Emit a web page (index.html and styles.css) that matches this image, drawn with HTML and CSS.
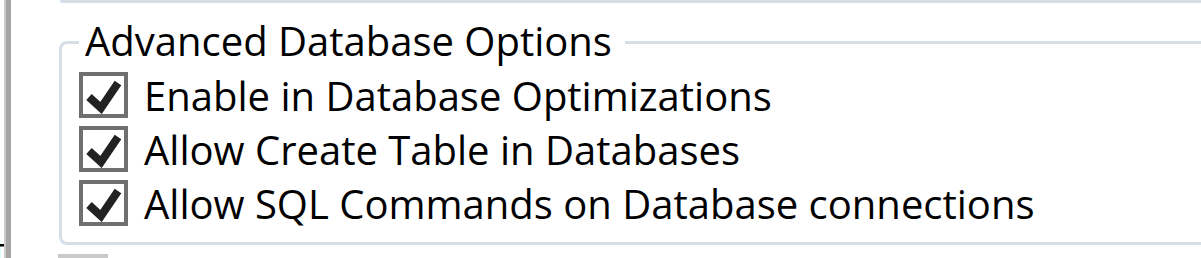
FILE: index.html
```html
<!DOCTYPE html>
<html lang="en">
  <head>
    <meta charset="UTF-8" />
    <meta name="viewport" content="width=device-width, initial-scale=1.0" />
    <title>Advanced Database Options</title>
    <link rel="stylesheet" href="styles.css">
  </head>
  <body>
    <!-- clipped panel on the left and its splitter -->
    <div class="side"><span class="side-text">t</span></div>
    <div class="splitter"></div>

    <div class="panel">
      <!-- bottom edge of the group above -->
      <div class="prev-group"></div>

      <fieldset class="group">
        <legend>Advanced Database Options</legend>
        <label class="option">
          <span class="box">
            <svg viewBox="0 0 41 38"><path d="M6 21 L18 32 L35 7" /></svg>
          </span>
          <span class="option-text">Enable in Database Optimizations</span>
        </label>
        <label class="option">
          <span class="box">
            <svg viewBox="0 0 41 38"><path d="M6 21 L18 32 L35 7" /></svg>
          </span>
          <span class="option-text">Allow Create Table in Databases</span>
        </label>
        <label class="option">
          <span class="box">
            <svg viewBox="0 0 41 38"><path d="M6 21 L18 32 L35 7" /></svg>
          </span>
          <span class="option-text">Allow SQL Commands on Database connections</span>
        </label>
      </fieldset>

      <!-- top of the button below -->
      <div class="next-button"></div>
    </div>
  </body>
</html>
```

FILE: styles.css
```css
* {
  margin: 0;
  padding: 0;
  box-sizing: border-box;
}

body {
  height: 258px;
  overflow: hidden;
  display: flex;
  background-color: #fff;
  color: #000;
  font-family: "Open Sans", "Noto Sans", sans-serif;
  font-size: 40px;
}

/* left side */
.side {
  width: 4px;
  display: flex;
  align-items: flex-end;
  justify-content: flex-end;
}
.side-text {
  line-height: 40px;
  margin-right: -3px;
  margin-bottom: -13px;
}
.splitter {
  width: 7px;
  border-left: 2px solid #cbcbcb;
  background-color: #a4a4a4;
}

/* main area */
.panel {
  flex: 1;
  min-width: 0;
  display: flex;
  flex-direction: column;
}

.prev-group {
  height: 5px;
  margin: 0 -20px 0 49px;
  border-left: 3px solid #d6dfe7;
  border-bottom: 3px solid #d6dfe7;
  border-bottom-left-radius: 8px;
}

/* group box */
.group {
  min-width: 0;
  margin: 14px -20px 0 48px;
  padding: 0 0 12px 17px;
  border: 3px solid #d6dfe7;
  border-radius: 8px;
}
.group legend {
  line-height: 47px;
  padding: 0 13px 4px 6px;
}

.option {
  height: 54px;
  display: flex;
  align-items: center;
  gap: 16px;
}
.option-text {
  line-height: 50px;
  padding-top: 2px;
  white-space: nowrap;
}

.box {
  width: 49px;
  height: 46px;
  flex: none;
  border: 4px solid #6f6f6f;
  background-color: #fff;
}
.box svg {
  display: block;
  width: 100%;
  height: 100%;
}
.box path {
  fill: none;
  stroke: #222;
  stroke-width: 8;
}

.next-button {
  width: 50px;
  height: 20px;
  flex: none;
  margin: 9px 0 0 47px;
  background-color: #c9c9c9;
}
```
